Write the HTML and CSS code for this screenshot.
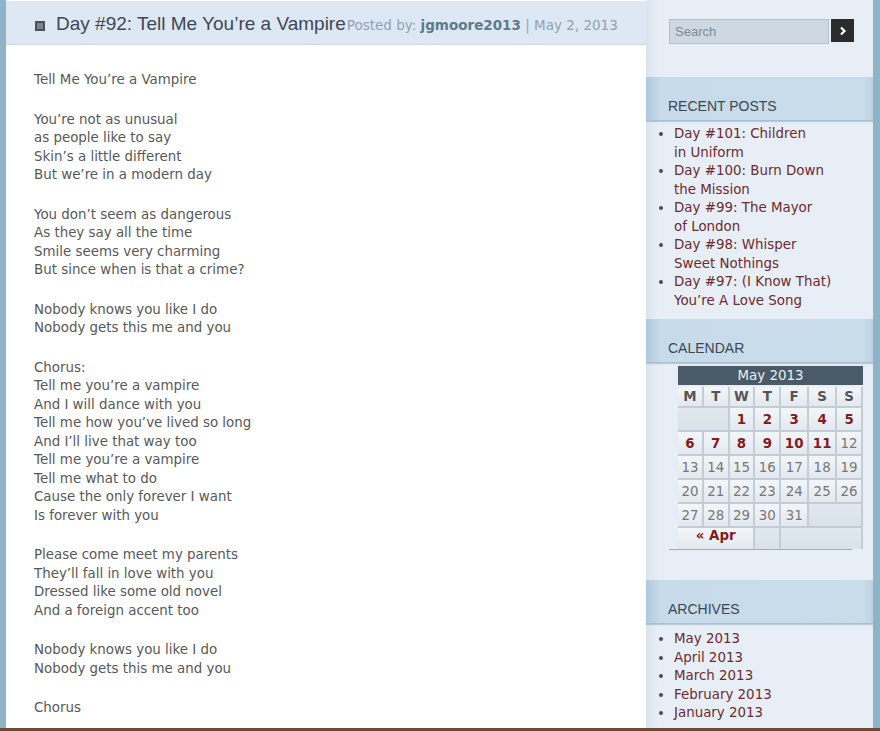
FILE: index.html
```html
<!DOCTYPE html>
<html lang="en">
<head>
    <meta charset="UTF-8">
    <title>Day #92: Tell Me You're a Vampire</title>
    <link rel="stylesheet" href="styles.css">
</head>
<body>
    <div class="page">
        <div class="main">
            <div class="post-header">
                <svg class="post-icon" width="10" height="10" viewBox="0 0 10 10">
                    <rect x="0" y="0" width="10" height="10" fill="#4b5157"/>
                    <rect x="2" y="2.5" width="6" height="1" fill="#aeb5bc"/>
                    <rect x="2" y="4.5" width="6" height="1" fill="#aeb5bc"/>
                    <rect x="2" y="6.5" width="6" height="1" fill="#aeb5bc"/>
                </svg>
                <h2 class="post-title">Day #92: Tell Me You’re a Vampire</h2><span class="post-meta">Posted by: <b>jgmoore2013</b> | May 2, 2013</span>
            </div>

            <div class="post-body">
                <p>Tell Me You’re a Vampire</p>
                <p>You’re not as unusual<br>as people like to say<br>Skin’s a little different<br>But we’re in a modern day</p>
                <p>You don’t seem as dangerous<br>As they say all the time<br>Smile seems very charming<br>But since when is that a crime?</p>
                <p>Nobody knows you like I do<br>Nobody gets this me and you</p>
                <p>Chorus:<br>Tell me you’re a vampire<br>And I will dance with you<br>Tell me how you’ve lived so long<br>And I’ll live that way too<br>Tell me you’re a vampire<br>Tell me what to do<br>Cause the only forever I want<br>Is forever with you</p>
                <p>Please come meet my parents<br>They’ll fall in love with you<br>Dressed like some old novel<br>And a foreign accent too</p>
                <p>Nobody knows you like I do<br>Nobody gets this me and you</p>
                <p>Chorus</p>
            </div>
        </div>

        <div class="sidebar">
            <form class="search">
                <input type="text" placeholder="Search">
                <button type="button">
                    <svg width="10" height="10" viewBox="0 0 10 10"><polyline points="3,1.5 6.5,5 3,8.5" fill="none" stroke="#fff" stroke-width="2.2"/></svg>
                </button>
            </form>

            <div class="widget recent">
                <h3 class="widget-title">RECENT POSTS</h3>
                <ul>
                    <li><a href="#">Day #101: Children<br>in Uniform</a></li>
                    <li><a href="#">Day #100: Burn Down<br>the Mission</a></li>
                    <li><a href="#">Day #99: The Mayor<br>of London</a></li>
                    <li><a href="#">Day #98: Whisper<br>Sweet Nothings</a></li>
                    <li><a href="#">Day #97: (I Know That)<br>You’re A Love Song</a></li>
                </ul>
            </div>

            <div class="widget calendar">
                <h3 class="widget-title">CALENDAR</h3>
                <div class="cal-wrap">
                    <table>
                        <caption>May 2013</caption>
                        <thead>
                            <tr><th>M</th><th>T</th><th>W</th><th>T</th><th>F</th><th>S</th><th>S</th></tr>
                        </thead>
                        <tbody>
                            <tr><td colspan="2" class="pad"></td><td><a href="#">1</a></td><td><a href="#">2</a></td><td><a href="#">3</a></td><td><a href="#">4</a></td><td><a href="#">5</a></td></tr>
                            <tr><td><a href="#">6</a></td><td><a href="#">7</a></td><td><a href="#">8</a></td><td><a href="#">9</a></td><td><a href="#">10</a></td><td><a href="#">11</a></td><td>12</td></tr>
                            <tr><td>13</td><td>14</td><td>15</td><td>16</td><td>17</td><td>18</td><td>19</td></tr>
                            <tr><td>20</td><td>21</td><td>22</td><td>23</td><td>24</td><td>25</td><td>26</td></tr>
                            <tr><td>27</td><td>28</td><td>29</td><td>30</td><td>31</td><td colspan="2" class="pad"></td></tr>
                        </tbody>
                        <tfoot>
                            <tr><td colspan="3" class="prev"><a href="#">« Apr</a></td><td class="pad"></td><td colspan="3" class="pad"></td></tr>
                        </tfoot>
                    </table>
                </div>
                <div class="cal-line"></div>
            </div>

            <div class="widget archives">
                <h3 class="widget-title">ARCHIVES</h3>
                <ul>
                    <li><a href="#">May 2013</a></li>
                    <li><a href="#">April 2013</a></li>
                    <li><a href="#">March 2013</a></li>
                    <li><a href="#">February 2013</a></li>
                    <li><a href="#">January 2013</a></li>
                </ul>
            </div>
        </div>
    </div>
</body>
</html>
```

FILE: styles.css
```css
body {
    margin: 0;
    background: #6a4b34;
    font-family: "DejaVu Sans", Verdana, sans-serif;
}
.page {
    display: flex;
    height: 728px;
    overflow: hidden;
    border-left: 6px solid #8fb4c9;
    border-right: 7px solid #8fb4c9;
}
.main {
    width: 640px;
    background: #fff;
    padding-top: 1px;
}
.post-header {
    height: 44px;
    box-sizing: border-box;
    padding: 0 0 0 29px;
    background: #dee8f4;
    border-bottom: 1px solid #cbd7e3;
    display: flex;
    align-items: baseline;
    line-height: 46px;
}
.post-icon {
    margin-right: 11px;
    align-self: center;
    margin-top: 6px;
}
.post-title {
    margin: 0;
    font-family: "Liberation Sans", Arial, sans-serif;
    font-weight: normal;
    font-size: 19px;
    color: #3d4852;
}
.post-meta {
    font-size: 13.5px;
    color: #8da3b3;
    margin-left: 1px;
}
.post-meta b {
    color: #5d7b8b;
}
.post-body {
    padding: 26px 28px 0;
    font-size: 13.4px;
    line-height: 18.5px;
    color: #585858;
}
.post-body p {
    margin: 0 0 21px;
}

/* sidebar */
.sidebar {
    width: 227px;
    background: linear-gradient(to right, #dbe4ee, #e7eef6 12px);
    padding-top: 19px;
}
.search {
    display: flex;
    margin: 0 0 33px 23px;
}
.search input {
    width: 160px;
    height: 25px;
    box-sizing: border-box;
    border: 1px solid #b3c1ce;
    background: #cdd8e3;
    padding: 0 5px;
    font-family: "Liberation Sans", Arial, sans-serif;
    font-size: 13px;
    color: #555;
}
.search input::placeholder {
    color: #7f8a94;
}
.search button {
    width: 23px;
    height: 23px;
    margin-left: 2px;
    border: none;
    padding: 0;
    background: #2b2c2d;
    display: flex;
    align-items: center;
    justify-content: center;
}
.widget-title {
    margin: 0;
    height: 44px;
    box-sizing: border-box;
    padding: 20px 0 0 22px;
    font-family: "Liberation Sans", Arial, sans-serif;
    font-weight: normal;
    font-size: 14px;
    line-height: 18px;
    color: #3b4852;
    background: linear-gradient(to right, #aecadd, #c7dbea 14px, #c9dcea 96%, #bcd2e3);
    border-bottom: 1px solid #a7c0d2;
    box-shadow: 0 1px 1px rgba(120, 150, 175, 0.4);
}
.widget ul {
    margin: 4px 0 0;
    padding-left: 28px;
    font-size: 13.4px;
    line-height: 18.5px;
    color: #4c4c4c;
}
.archives ul {
    margin-top: 6px;
}
.widget a {
    color: #6c2b2d;
    text-decoration: none;
}
.recent {
    margin-bottom: 9px;
}

/* calendar */
.cal-wrap {
    padding: 3px 0 0 32px;
}
.calendar table {
    width: 185px;
    border-collapse: separate;
    border-spacing: 0;
    font-size: 13.4px;
    text-align: center;
    color: #777;
}
.calendar caption {
    background: #4a5b67;
    color: #e9eff3;
    height: 19px;
    line-height: 19px;
    margin-bottom: 2px;
}
.calendar th,
.calendar td {
    padding: 0;
    border-right: 2px solid #c3cdd6;
    border-bottom: 2px solid #c3cdd6;
    background: linear-gradient(#f3f6f9, #e3e9ef);
}
.calendar th {
    height: 19px;
    font-weight: bold;
    color: #555;
}
.calendar td {
    height: 22px;
}
.calendar td a {
    font-weight: bold;
    color: #861a1c;
}
.calendar td.pad {
    background: linear-gradient(#e1e8ef, #d9e2ea);
}
.calendar tfoot td {
    height: 21px;
    border-bottom: none;
    vertical-align: top;
}
.calendar .cal-line {
    margin: 0 0 30px 23px;
    width: 183px;
    height: 1px;
    background: #a4adb5;
}
```
